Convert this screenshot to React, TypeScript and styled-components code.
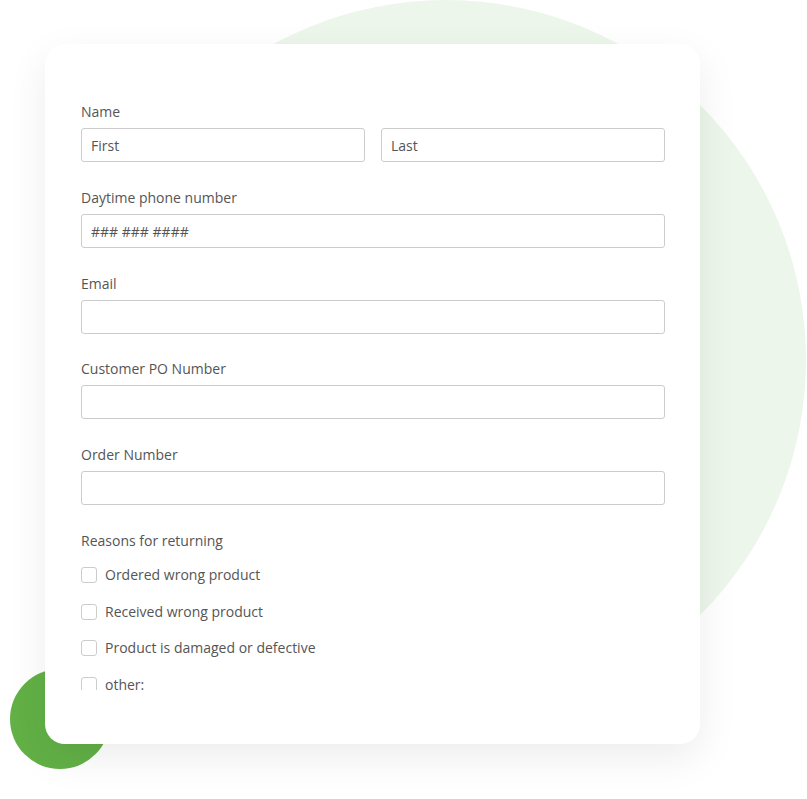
import * as React from 'react';
import styled, { createGlobalStyle } from 'styled-components';

const GlobalStyle = createGlobalStyle`
  html, body {
    margin: 0;
    padding: 0;
    background: #fff;
  }
  body {
    font-family: 'Open Sans', 'Noto Sans', Arial, sans-serif;
    color: #555;
  }
`;

const Page = styled.div`
  position: relative;
  width: 807px;
  height: 799px;
  overflow: hidden;
  padding: 44px 0 0 45px;
  box-sizing: border-box;
`;

// decorative backdrop circles
const Circle = styled.div<{ $size: number; $x: number; $y: number; $color: string }>`
  position: absolute;
  left: ${({ $x }) => $x}px;
  top: ${({ $y }) => $y}px;
  width: ${({ $size }) => $size}px;
  height: ${({ $size }) => $size}px;
  border-radius: 50%;
  background: ${({ $color }) => $color};
`;

const Card = styled.div`
  position: relative;
  width: 655px;
  height: 700px;
  box-sizing: border-box;
  background: #fff;
  border-radius: 20px;
  box-shadow: 0 14px 40px rgba(0, 0, 0, 0.075);
  padding-bottom: 54px;
`;

const ScrollForm = styled.form`
  height: 646px;
  overflow: hidden;
  box-sizing: border-box;
  padding: 58px 35px 0 36px;
  display: flex;
  flex-direction: column;
`;

const Field = styled.div<{ $gap?: number }>`
  display: flex;
  flex-direction: column;
  gap: 6px;
  margin-bottom: ${({ $gap }) => $gap ?? 26}px;
`;

const Label = styled.label`
  font-size: 14px;
  line-height: 20px;
  color: #555;
`;

const InputRow = styled.div`
  display: flex;
  gap: 16px;
`;

const Input = styled.input`
  flex: 1;
  min-width: 0;
  height: 34px;
  box-sizing: border-box;
  border: 1px solid #cccccc;
  border-radius: 3px;
  padding: 0 9px;
  font-family: 'Open Sans', 'Noto Sans', Arial, sans-serif;
  font-size: 14px;
  color: #555;
  background: #fff;
  outline: none;

  &::placeholder {
    color: #555;
    opacity: 1;
  }
`;

const CheckList = styled.div`
  display: flex;
  flex-direction: column;
  gap: 16.5px;
  margin-top: 14px;
`;

const CheckItem = styled.label`
  display: flex;
  align-items: center;
  gap: 8px;
  font-size: 14px;
  line-height: 20px;
  color: #555;
`;

const CheckBox = styled.span`
  width: 16px;
  height: 16px;
  box-sizing: border-box;
  border: 1px solid #cccccc;
  border-radius: 3px;
  background: #fff;
  flex-shrink: 0;
`;

const REASONS = [
  'Ordered wrong product',
  'Received wrong product',
  'Product is damaged or defective',
  'other:',
];

function TextField(props: { label: string; placeholder?: string; gap?: number }) {
  return (
    <Field $gap={props.gap}>
      <Label>{props.label}</Label>
      <InputRow>
        <Input placeholder={props.placeholder} />
      </InputRow>
    </Field>
  );
}

export default function App() {
  return (
    <Page>
      <GlobalStyle />
      <Circle $size={720} $x={86} $y={0} $color="#edf6eb" />
      <Circle $size={100} $x={10} $y={669} $color="#62b046" />
      <Card>
        <ScrollForm onSubmit={(e) => e.preventDefault()}>
          <Field>
            <Label>Name</Label>
            <InputRow>
              <Input placeholder="First" />
              <Input placeholder="Last" />
            </InputRow>
          </Field>
          <TextField label="Daytime phone number" placeholder="### ### ####" />
          <TextField label="Email" gap={25} />
          <TextField label="Customer PO Number" />
          <TextField label="Order Number" />
          <Label>Reasons for returning</Label>
          <CheckList>
            {REASONS.map((reason) => (
              <CheckItem key={reason}>
                <CheckBox />
                {reason}
              </CheckItem>
            ))}
          </CheckList>
        </ScrollForm>
      </Card>
    </Page>
  );
}
